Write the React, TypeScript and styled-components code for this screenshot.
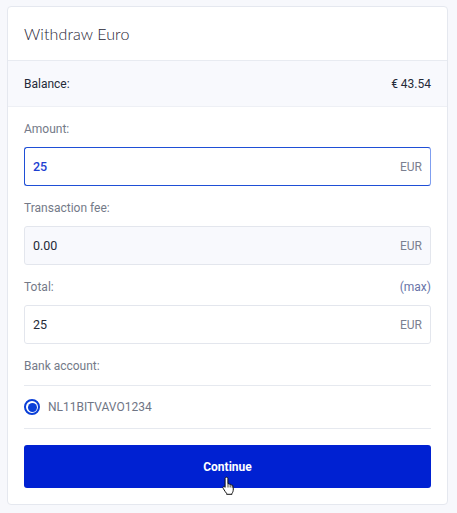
import React from "react";
import styled, { createGlobalStyle } from "styled-components";

const Global = createGlobalStyle`
  html, body { margin: 0; padding: 0; background: #f7f8fc; }
  body { font-family: Roboto, "Liberation Sans", Arial, sans-serif; -webkit-font-smoothing: antialiased; }
  * { box-sizing: border-box; }
`;

const Page = styled.div`
  padding: 6px 10px 8px 7px;
  width: 457px;
  height: 513px;
`;

const Card = styled.div`
  width: 441px;
  background: #fff;
  border: 1px solid #e5e8ef;
  border-radius: 4px;
  overflow: hidden;
`;

const Header = styled.div`
  height: 54px;
  display: flex;
  align-items: center;
  padding: 0 16px;
  border-bottom: 1px solid #e8ebf1;
`;

const Title = styled.h1`
  margin: 0;
  font-family: Lato, "Open Sans", sans-serif;
  font-weight: 300;
  font-size: 16px;
  color: #1f2535;
  letter-spacing: 0.1px;
`;

const BalanceRow = styled.div`
  height: 46px;
  display: flex;
  align-items: center;
  justify-content: space-between;
  padding: 0 16px;
  background: #f8f9fd;
  border-bottom: 1px solid #eef0f5;
  font-size: 12px;
  color: #242a38;
`;

const Body = styled.div`
  padding: 14px 16px 16px;
  display: flex;
  flex-direction: column;
`;

const Field = styled.div`
  display: flex;
  flex-direction: column;
  margin-bottom: 14px;
`;

const LabelRow = styled.div`
  height: 16px;
  line-height: 16px;
  display: flex;
  justify-content: space-between;
  margin-bottom: 10px;
  font-size: 12px;
  color: #747a88;
`;

const MaxLink = styled.span`
  color: #6874a8;
`;

const InputBox = styled.div<{ $focused?: boolean; $disabled?: boolean }>`
  height: 39px;
  display: flex;
  align-items: center;
  justify-content: space-between;
  padding: 0 8px;
  border-radius: 3px;
  border: 1px solid ${(p) => (p.$focused ? "#1f4fd6" : "#e3e6ed")};
  border-right-color: ${(p) => (p.$focused ? "#7f9ef0" : "#e3e6ed")};
  background: ${(p) => (p.$disabled ? "#f8f9fd" : "#fff")};
`;

const Value = styled.span<{ $focused?: boolean }>`
  font-size: 12.5px;
  font-weight: ${(p) => (p.$focused ? 500 : 400)};
  color: ${(p) => (p.$focused ? "#1d3fd1" : "#262b38")};
`;

const Unit = styled.span`
  font-size: 12px;
  color: #7b8090;
`;

const AccountList = styled.div`
  border-top: 1px solid #e6e9ef;
  border-bottom: 1px solid #e6e9ef;
  margin-top: 1px;
`;

const AccountRow = styled.label`
  height: 42px;
  display: flex;
  align-items: center;
  gap: 8px;
  font-size: 12px;
  color: #6f7585;
`;

const Radio = styled.span`
  width: 16px;
  height: 16px;
  border-radius: 50%;
  border: 2px solid #0a3fd8;
  display: flex;
  align-items: center;
  justify-content: center;
  &::after {
    content: "";
    width: 9px;
    height: 9px;
    border-radius: 50%;
    background: #0a3fd8;
  }
`;

const ButtonWrap = styled.div`
  position: relative;
  margin-top: 16px;
`;

const Button = styled.button`
  width: 100%;
  height: 43px;
  border: none;
  border-radius: 3px;
  background: #0021d2;
  color: #fff;
  font-family: Roboto, "Liberation Sans", sans-serif;
  font-weight: 700;
  font-size: 12px;
  cursor: pointer;
`;

const Cursor = styled.svg`
  position: absolute;
  left: 198px;
  top: 31px;
  pointer-events: none;
`;

export default function App() {
  return (
    <Page>
      <Global />
      <Card>
        <Header>
          <Title>Withdraw Euro</Title>
        </Header>
        <BalanceRow>
          <span>Balance:</span>
          <span>€ 43.54</span>
        </BalanceRow>
        <Body>
          <Field>
            <LabelRow>
              <span>Amount:</span>
            </LabelRow>
            <InputBox $focused>
              <Value $focused>25</Value>
              <Unit>EUR</Unit>
            </InputBox>
          </Field>
          <Field>
            <LabelRow>
              <span>Transaction fee:</span>
            </LabelRow>
            <InputBox $disabled>
              <Value>0.00</Value>
              <Unit>EUR</Unit>
            </InputBox>
          </Field>
          <Field>
            <LabelRow>
              <span>Total:</span>
              <MaxLink>(max)</MaxLink>
            </LabelRow>
            <InputBox>
              <Value>25</Value>
              <Unit>EUR</Unit>
            </InputBox>
          </Field>
          <LabelRow>
            <span>Bank account:</span>
          </LabelRow>
          <AccountList>
            <AccountRow>
              <Radio />
              <span>NL11BITVAVO1234</span>
            </AccountRow>
          </AccountList>
          <ButtonWrap>
            <Button>Continue</Button>
            <Cursor width="14" height="19" viewBox="0 0 14 19">
              <path
                d="M4.5 1.2c.8 0 1.4.6 1.4 1.4v5.2l.3-.1c.7-.2 1.3.1 1.5.7l.1.1c.6-.3 1.3-.1 1.6.5.6-.2 1.3.1 1.5.8.2.6.4 1.8.4 3.2 0 2.2-.6 3.5-1.3 4.4v.9H4.6v-.9C3.7 16.4 2.6 14.7 1.6 13c-.5-.8-.9-1.5-.6-2 .3-.6 1.1-.7 1.8 0l.3.3V2.6c0-.8.6-1.4 1.4-1.4z"
                fill="#fff"
                stroke="#111"
                strokeWidth="1"
                strokeLinejoin="round"
              />
              <path d="M6 8v3.5M8.2 8.5v3M10.2 9.5v2.3" stroke="#111" strokeWidth="0.8" />
            </Cursor>
          </ButtonWrap>
        </Body>
      </Card>
    </Page>
  );
}
